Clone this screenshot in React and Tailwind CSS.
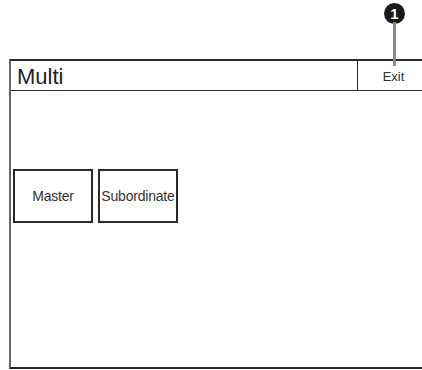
import React from 'react';

const font = { fontFamily: '"Liberation Sans", Arial, sans-serif' };

const ModeButton = ({ label }) => (
  <button className="w-[80px] h-[54px] border-2 border-[#2a2a2a] bg-white flex items-center justify-center text-[14px] text-[#333] tracking-[-0.2px]">
    {label}
  </button>
);

export default function App() {
  return (
    <div className="w-[422px] h-[370px] bg-white overflow-hidden flex flex-col" style={font}>
      <div className="relative h-[59px] shrink-0">
        <div className="absolute left-[384px] top-[3px] w-[21px] h-[21px] rounded-full bg-[#1a1a1a] flex items-center justify-center text-white text-[15px] font-bold leading-none">
          1
        </div>
        <div className="absolute left-[393px] top-[22px] w-[2.5px] h-[44px] bg-[#8a8a8a] z-20" />
      </div>

      <div className="ml-[9px] w-[420px] h-[310px] border-t-2 border-l-2 border-b-2 border-t-[#2a2a2a] border-l-[#666] border-b-[#2a2a2a] flex flex-col">
        <div className="h-[30px] flex border-b-[1.5px] border-[#2a2a2a]">
          <div className="flex-1 flex items-center pl-[6px] text-[22px] text-[#222] leading-none pt-[2px]">Multi</div>
          <div className="w-[72px] border-l-[1.5px] border-[#2a2a2a] flex items-center justify-center text-[13px] text-[#333] pt-[3px]">
            Exit
          </div>
        </div>
        <div className="flex gap-[5px] pl-[2px] pt-[78px]">
          <ModeButton label="Master" />
          <ModeButton label="Subordinate" />
        </div>
      </div>
    </div>
  );
}
